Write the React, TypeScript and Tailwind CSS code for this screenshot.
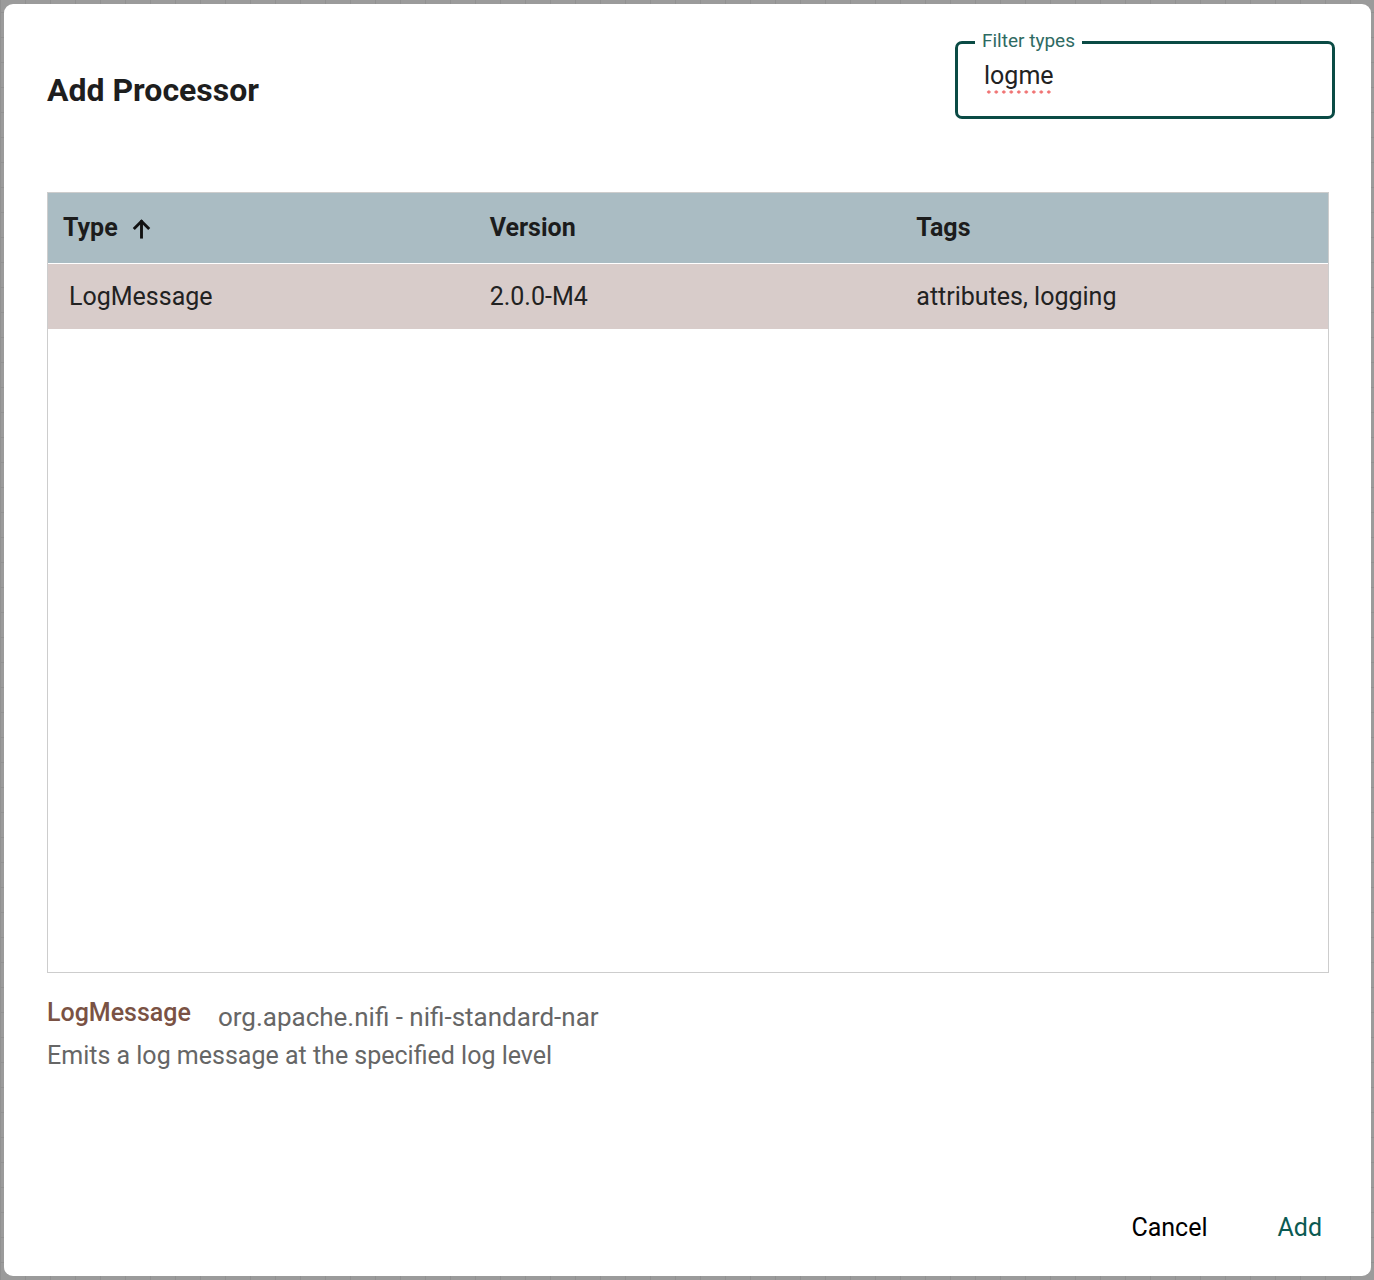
import React from "react";

const font = { fontFamily: "Roboto, 'Noto Sans', sans-serif" };

const ArrowUp: React.FC = () => (
  <svg viewBox="0 0 24 24" className="w-[23px] h-[23px]" fill="none" stroke="#111" strokeWidth={3} strokeLinecap="square">
    <path d="M12 21V5" />
    <path d="M5 11.5l7-7 7 7" />
  </svg>
);

const FilterField: React.FC = () => (
  <div className="relative w-[380px] h-[78px] -mr-[6px] mt-[37px] border-[3px] border-[#0b4b45] rounded-[7px]">
    <span className="absolute -top-[15px] left-[17px] bg-white px-[7px] text-[19px] leading-[24px] text-[#2e6a62]">
      Filter types
    </span>
    <div className="pl-[26px] pt-[17px] text-[25px] leading-[30px] text-[#222]">
      <span className="pb-[4px] bg-[radial-gradient(circle,#f07272_1.4px,transparent_1.8px)] bg-[size:7.5px_4px] bg-repeat-x bg-bottom">
        logme
      </span>
    </div>
  </div>
);

export default function App() {
  return (
    <div
      className="h-[1280px] w-full p-[4px] bg-[#9b9b9b] bg-[linear-gradient(#919191_1px,transparent_1px),linear-gradient(90deg,#919191_1px,transparent_1px)] bg-[size:25px_25px] bg-[position:0_12px]"
      style={font}
    >
      <div className="h-full w-[1367px] bg-white rounded-[9px] pl-[43px] pr-[42px] flex flex-col">
        <div className="flex justify-between items-start">
          <h1 className="mt-[66px] text-[32px] leading-[40px] font-bold text-[#1e1e1e]">Add Processor</h1>
          <FilterField />
        </div>

        <div className="mt-[73px] h-[781px] border border-[#cdcdcd] flex flex-col">
          <div className="grid grid-cols-3 h-[71px] bg-[#aabcc3] border-b border-white items-center text-[25px] font-bold text-[#1c1c1c]">
            <div className="pl-[15px] flex items-center gap-[12px]">
              <span>Type</span>
              <ArrowUp />
            </div>
            <div className="pl-[15px]">Version</div>
            <div className="pl-[15px]">Tags</div>
          </div>
          <div className="grid grid-cols-3 h-[65px] bg-[#d8ccca] items-center text-[25px] text-[#222]">
            <div className="pl-[21px]">LogMessage</div>
            <div className="pl-[15px]">2.0.0-M4</div>
            <div className="pl-[15px]">attributes, logging</div>
          </div>
        </div>

        <div className="mt-[25px] flex items-start gap-[27px]">
          <span className="text-[25px] font-medium text-[#7a5244] leading-[30px]">LogMessage</span>
          <span className="text-[26px] text-[#666] leading-[30px] mt-[4px]">org.apache.nifi - nifi-standard-nar</span>
        </div>
        <p className="mt-[9px] text-[25px] leading-[30px] text-[#666]">
          Emits a log message at the specified log level
        </p>

        <div className="mt-auto mb-[33px] flex justify-end items-center gap-[70px] pr-[7px] text-[25px] leading-[30px]">
          <button className="text-black">Cancel</button>
          <button className="text-[#0b5a52]">Add</button>
        </div>
      </div>
    </div>
  );
}
